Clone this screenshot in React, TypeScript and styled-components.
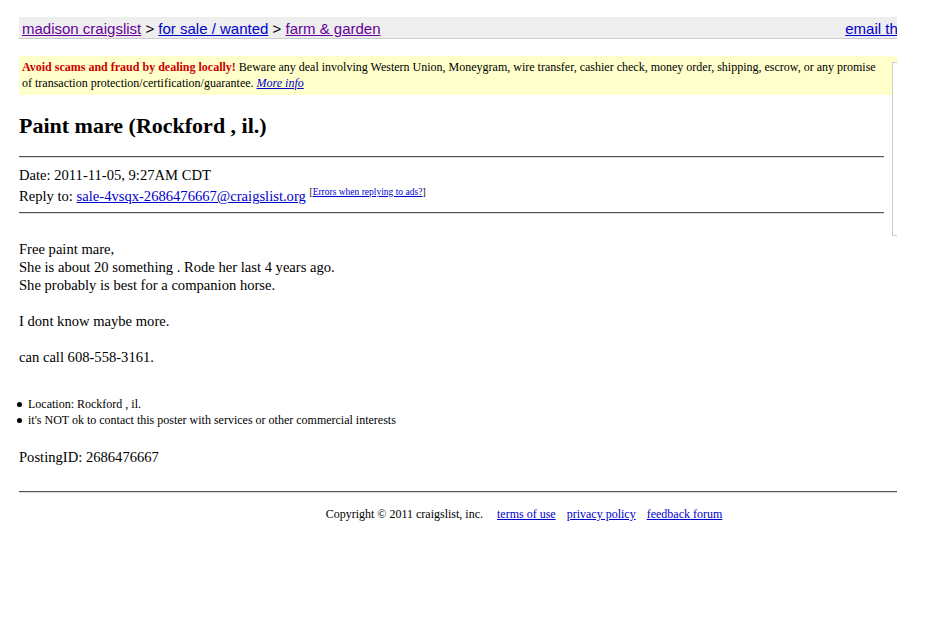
import React from "react";
import styled, { createGlobalStyle } from "styled-components";

const GlobalStyle = createGlobalStyle`
    html, body {
        margin: 0;
        padding: 0;
        background: #fff;
    }
    body {
        font-family: "Liberation Serif", "Times New Roman", serif;
        color: #000;
    }
`;

const Viewport = styled.div`
    width: 897px;
    overflow: hidden;
`;

const Page = styled.div`
    position: relative;
    width: 1010px;
    margin-left: 19px;
    padding-top: 17px;
    padding-bottom: 90px;
`;

const Crumbs = styled.div`
    display: flex;
    justify-content: space-between;
    align-items: center;
    height: 22px;
    box-sizing: border-box;
    margin-right: -3px;
    padding: 2px 0 0 3px;
    background: #eeeeee;
    border-bottom: 1px solid #cccccc;
    font-family: "Liberation Sans", Arial, sans-serif;
    font-size: 15px;
    white-space: nowrap;
`;

const Link = styled.a<{ visited?: boolean }>`
    color: ${p => (p.visited ? "#660099" : "#0000cc")};
    text-decoration: underline;
    cursor: pointer;
`;

const Warning = styled.div`
    margin-top: 17px;
    background: #ffffcc;
    padding: 3px 147px 4px 3px;
    font-size: 12px;
    line-height: 16px;
`;

const Alert = styled.b`
    color: #cc0000;
`;

const FlagBox = styled.div`
    position: absolute;
    left: 873px;
    top: 62px;
    width: 130px;
    height: 172px;
    background: #fff;
    border: 1px solid #cccccc;
`;

const Posting = styled.div`
    margin-right: 145px;
`;

const Title = styled.h2`
    font-size: 22px;
    font-weight: bold;
    margin: 17px 0 0;
    line-height: 28px;
`;

const Rule = styled.hr<{ gap?: number }>`
    border: 0;
    border-top: 1px solid #555;
    border-bottom: 1px solid #ddd;
    margin: ${p => p.gap ?? 0}px 0 0;
`;

const Meta = styled.div`
    font-size: 14.6px;
    line-height: 18px;
    padding: 8px 0 7px;
`;

const ReplyLine = styled.div`
    margin-top: 3px;
`;

const Sup = styled.sup`
    font-size: 9.5px;
    line-height: 0;
`;

const Body = styled.div`
    font-size: 14.6px;
    line-height: 18px;
    margin-top: 26px;
`;

const Bullets = styled.ul`
    list-style: none;
    margin: 30px 0 0 -2px;
    padding: 0;
    font-size: 12px;
    line-height: 16px;
`;

const Bullet = styled.li`
    display: flex;
    align-items: center;

    &::before {
        content: "";
        flex: none;
        width: 5px;
        height: 5px;
        border-radius: 50%;
        background: #000;
        margin-right: 6px;
    }
`;

const PostingId = styled.div`
    font-size: 14.6px;
    line-height: 18px;
    margin-top: 20px;
`;

const Footer = styled.div`
    text-align: center;
    font-size: 12px;
    line-height: 16px;
    margin-top: 13px;
    & a {
        margin-left: 11px;
    }
`;

const App: React.FC = () => {
    return (
        <>
            <GlobalStyle />
            <Viewport>
                <Page>
                    <Crumbs>
                        <span>
                            <Link visited>madison craigslist</Link> &gt; <Link>for sale / wanted</Link> &gt; <Link visited>farm &amp; garden</Link>
                        </span>
                        <Link>email this posting to a friend</Link>
                    </Crumbs>

                    <Warning>
                        <Alert>Avoid scams and fraud by dealing locally!</Alert> Beware any deal involving Western Union, Moneygram, wire transfer, cashier check, money order, shipping, escrow, or any promise of transaction protection/certification/guarantee. <Link><i>More info</i></Link>
                    </Warning>

                    <FlagBox />

                    <Posting>
                        <Title>Paint mare (Rockford , il.)</Title>
                        <Rule gap={16} />
                        <Meta>
                            <div>Date: 2011-11-05, 9:27AM CDT</div>
                            <ReplyLine>
                                Reply to: <Link>sale-4vsqx-2686476667@craigslist.org</Link> <Sup>[<Link>Errors when replying to ads?</Link>]</Sup>
                            </ReplyLine>
                        </Meta>
                        <Rule />
                    </Posting>

                    <Body>
                        Free paint mare,<br />
                        She is about 20 something . Rode her last 4 years ago.<br />
                        She probably is best for a companion horse.<br />
                        <br />
                        I dont know maybe more.<br />
                        <br />
                        can call 608-558-3161.
                    </Body>

                    <Bullets>
                        <Bullet>Location: Rockford , il.</Bullet>
                        <Bullet>it's NOT ok to contact this poster with services or other commercial interests</Bullet>
                    </Bullets>

                    <PostingId>PostingID: 2686476667</PostingId>

                    <Rule gap={25} />

                    <Footer>
                        Copyright © 2011 craigslist, inc. <Link>terms of use</Link><Link>privacy policy</Link><Link>feedback forum</Link>
                    </Footer>
                </Page>
            </Viewport>
        </>
    );
};

export default App;
